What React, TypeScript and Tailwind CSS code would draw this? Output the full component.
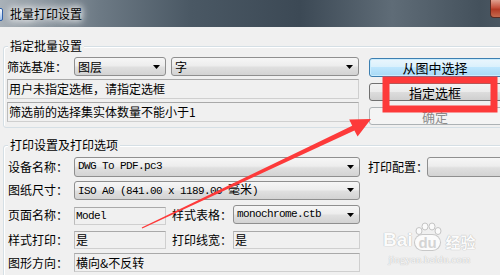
import React from 'react';

const cjk = "font-['Noto_Sans_CJK_SC',sans-serif] text-[12px] leading-none text-black";
const mono = "font-['Liberation_Mono','Noto_Sans_CJK_SC',monospace] text-[11px] tracking-[-0.6px]";

const Arrow = () => (
  <svg width="7" height="4" viewBox="0 0 7 4" className="shrink-0">
    <polygon points="0,0 7,0 3.5,4" fill="#000" />
  </svg>
);

const Combo = ({ children, className }: { children: React.ReactNode; className: string }) => (
  <div
    className={`flex shrink-0 items-center justify-between rounded-[3px] border border-[#8f8f8f] bg-[linear-gradient(#f6f6f6,#ededed_45%,#dfdfdf_55%,#d3d3d3)] pl-[3px] pr-[5px] ${className}`}
  >
    <span className="whitespace-nowrap">{children}</span>
    <Arrow />
  </div>
);

const Field = ({ children, className }: { children?: React.ReactNode; className: string }) => (
  <div
    className={`flex shrink-0 items-center border border-[#cfcfcf] border-t-[#a9a9a9] border-l-[#bcbcbc] bg-[#f0f0f0] pl-[1px] whitespace-nowrap ${className}`}
  >
    {children}
  </div>
);

const Label = ({ children, className }: { children: React.ReactNode; className: string }) => (
  <div className={`flex shrink-0 items-center whitespace-nowrap ${className}`}>{children}</div>
);

const GroupTitle = ({ children }: { children: React.ReactNode }) => (
  <div className="-mt-[8px] ml-[4px] w-fit bg-[#f0f0f0] px-[2px] leading-[14px]">{children}</div>
);

export default function App() {
  return (
    <div className={`relative h-[275px] w-[500px] overflow-hidden bg-[#f0f0f0] ${cjk}`}>
      <div className="w-[545px]">
        {/* title bar */}
        <div className="flex h-[27px] items-start bg-[linear-gradient(90deg,#a9b1b8_0%,#6d7a85_18%,#4a5864_35%,#3c4955_55%,#5f6c77_72%,#44515c_88%,#55616b_100%)]">
          <div className="-ml-[12px] mt-[8px] h-[13px] w-[15px] rounded-[2px] border border-[#2f5fa8] bg-[linear-gradient(#ffffff,#9cc0ee)]" />
          <div className="ml-[7px] mt-[7px] text-[12px] leading-[14px] [text-shadow:0_0_6px_#fff,0_0_8px_#fff,0_0_10px_#eee]">
            批量打印设置
          </div>
          <div className="ml-auto mr-[12px] h-[18px] w-[43px] rounded-b-[4px] border border-t-0 border-[#5a2b22] bg-[linear-gradient(#e0a08f,#c5503b_45%,#b33a24_55%,#c66a4e)]" />
        </div>

        {/* group 1 */}
        <div className="ml-[3px] mt-[19px] h-[82px] rounded-[3px] border border-[#d5dfe5] shadow-[inset_1px_1px_0_#fff]">
          <GroupTitle>指定批量设置</GroupTitle>
          <div className="mt-[4px] flex items-start pl-[3px]">
            <div className="flex w-[352px] flex-col gap-[3px]">
              <div className="flex h-[19px] items-center">
                <Label className="w-[67px]">筛选基准：</Label>
                <Combo className="h-[19px] w-[92px]">图层</Combo>
                <Combo className="ml-[5px] h-[19px] w-[188px]">字</Combo>
              </div>
              <Field className="h-[20px] w-[352px]">用户未指定选框，请指定选框</Field>
              <Field className="h-[20px] w-[352px]">筛选前的选择集实体数量不能小于1</Field>
            </div>
            <div className="ml-[10px] mt-[1px] flex flex-col gap-[6px]">
              <div className="flex h-[19px] w-[150px] items-center justify-center rounded-[3px] border border-[#3c7fb1] bg-[linear-gradient(#eaf6fd,#d9f0fc_50%,#bee6fd_50%,#a7d9f5)] text-[13px] shadow-[inset_0_0_0_1px_#c9ecfd]">
                <span className="-ml-[18px]">从图中选择</span>
              </div>
              <div className="flex h-[18px] w-[150px] items-center justify-center rounded-[3px] border border-[#707070] bg-[linear-gradient(#f2f2f2,#ebebeb_50%,#dddddd_50%,#cfcfcf)] text-[13px]">
                <span className="-ml-[18px]">指定选框</span>
              </div>
              <div className="flex h-[18px] w-[150px] items-center justify-center rounded-[3px] border border-[#adb2b5] bg-[#f4f4f4] text-[13px] text-[#8b8b8b]">
                <span className="-ml-[18px]">确定</span>
              </div>
            </div>
          </div>
        </div>

        {/* group 2 */}
        <div className="ml-[3px] mt-[17px] h-[140px] rounded-[3px] border border-[#d5dfe5] shadow-[inset_1px_1px_0_#fff]">
          <GroupTitle>打印设置及打印选项</GroupTitle>
          <div className="mt-[4px] flex flex-col pl-[4px]">
            <div className="flex h-[21px] items-center">
              <Label className="w-[66px]">设备名称：</Label>
              <Combo className={`h-[20px] w-[286px] ${mono}`}>DWG To PDF.pc3</Combo>
              <Label className="ml-[8px] w-[59px]">打印配置：</Label>
              <Combo className="h-[20px] w-[110px]"> </Combo>
            </div>
            <div className="mt-[3px] flex h-[20px] items-center">
              <Label className="w-[66px]">图纸尺寸：</Label>
              <Combo className={`h-[19px] w-[286px] ${mono}`}>
                ISO A0 (841.00 x 1189.00 <span className="font-['Noto_Sans_CJK_SC'] text-[12px] tracking-normal">毫米</span>)
              </Combo>
            </div>
            <div className="mt-[4px] flex h-[21px] items-center">
              <Label className="w-[66px]">页面名称：</Label>
              <Field className={`mt-[3px] h-[18px] w-[92px] ${mono}`}>Model</Field>
              <Label className="ml-[6px] w-[61px]">样式表格：</Label>
              <Combo className={`h-[19px] w-[127px] ${mono}`}>monochrome.ctb</Combo>
            </div>
            <div className="mt-[5px] flex h-[19px] items-center">
              <Label className="w-[66px]">样式打印：</Label>
              <Field className="h-[18px] w-[92px]">是</Field>
              <Label className="ml-[6px] w-[61px]">打印线宽：</Label>
              <Field className="h-[18px] w-[127px]">是</Field>
            </div>
            <div className="mt-[4px] flex h-[19px] items-center">
              <Label className="w-[66px]">图形方向：</Label>
              <Field className="h-[19px] w-[286px]">横向&amp;不反转</Field>
            </div>
          </div>
        </div>
      </div>

      {/* watermark */}
      <div className="absolute left-[383px] top-[222px] flex flex-col items-center">
        <div className="flex items-end font-['Liberation_Sans',sans-serif] text-[19px] font-bold leading-none text-[#fbfbfb] [text-shadow:0_0_1px_#b9b9b9,0_0_1px_#b9b9b9]">
          <span className="mb-[1px]">Bai</span>
          <div className="flex flex-col items-center">
            <svg width="30" height="13" viewBox="0 0 30 13">
              <ellipse cx="6" cy="9" rx="3" ry="3.5" fill="#fbfbfb" stroke="#c4c4c4" />
              <ellipse cx="12" cy="4.5" rx="3" ry="3.5" fill="#fbfbfb" stroke="#c4c4c4" />
              <ellipse cx="19" cy="4.5" rx="3" ry="3.5" fill="#fbfbfb" stroke="#c4c4c4" />
              <ellipse cx="25" cy="9" rx="3" ry="3.5" fill="#fbfbfb" stroke="#c4c4c4" />
            </svg>
            <span className="rounded-[8px] bg-[#fbfbfb] px-[3px] text-[15px] text-[#d4d4d4] [text-shadow:none] shadow-[0_0_0_1px_#c8c8c8]">du</span>
          </div>
          <span className="mb-[1px] ml-[3px] font-['Noto_Sans_CJK_SC',sans-serif] text-[15px]">经验</span>
        </div>
        <div className="mt-[4px] font-['Liberation_Serif',serif] text-[11px] leading-none text-[#f8f8f8] [text-shadow:0_0_1px_#c0c0c0,0_0_1px_#c0c0c0]">
          jingyan.baidu.com
        </div>
      </div>

      {/* annotation overlay */}
      <svg className="pointer-events-none absolute left-0 top-0" width="500" height="275" viewBox="0 0 500 275">
        <rect x="386" y="80" width="108" height="29" fill="none" stroke="#fd3a3a" strokeWidth="7" />
        <polygon
          points="142.3,228.6 354.4,130.6 357.6,136.6 371,119 349.2,119.6 352.2,125.8 141.7,227.4"
          fill="#fd3a3a"
        />
      </svg>
    </div>
  );
}
